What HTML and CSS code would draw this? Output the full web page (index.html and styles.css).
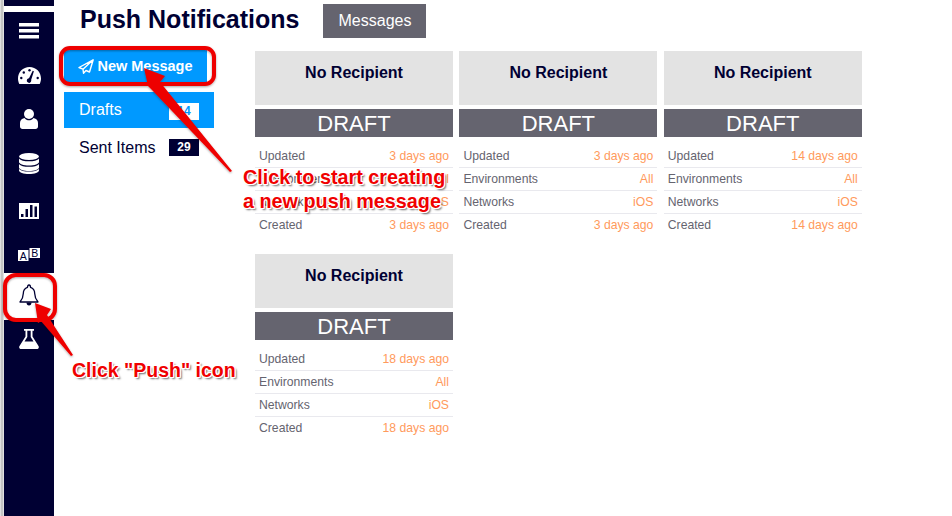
FILE: index.html
```html
<!DOCTYPE html>
<html>
<head>
    <title>Push Notifications</title>
    <link rel="stylesheet" href="styles.css">
</head>
<body>
    <div class="app">
        <div class="edge"></div>
        <nav class="sidebar">
            <div class="sidebar-top"></div>
            <div class="nav-item">
                <svg width="20" height="16" viewBox="0 0 20 16"><path fill="#fff" d="M0 0h20v3.4H0zM0 6h20v3.6H0zM0 12h20v3.6H0z"/></svg>
            </div>
            <div class="nav-item">
                <svg width="23" height="17" viewBox="0 0 23 17">
                    <path fill="#fff" d="M11.500 0C5 0 0 5 0 11.500c0 2 .5 3.800 1.300 5.500h20.400c.8-1.700 1.300-3.500 1.300-5.500C23 5 18 0 11.500 0z"/>
                    <g fill="#000033">
                        <circle cx="11.500" cy="3.300" r="1.200"/>
                        <circle cx="5.800" cy="5.500" r="1.200"/>
                        <circle cx="3.300" cy="11" r="1.200"/>
                        <circle cx="19.700" cy="11" r="1.200"/>
                        <path d="M14.700 3.800l1.200.5-2.700 8.500c.4 1.500-.5 3-1.900 3.100-1.500.1-2.500-1-2.500-2.300 0-1.200.9-2.200 2.200-2.400z"/>
                    </g>
                </svg>
            </div>
            <div class="nav-item">
                <svg width="18" height="20" viewBox="0 0 18 20"><circle cx="9" cy="5" r="5" fill="#fff"/><path fill="#fff" d="M4.500 9c1 1.500 2.800 2.300 4.500 2.300S12.500 10.500 13.500 9C16.500 9.500 18 11.500 18 14v3.500c0 1.400-1 2.500-2.500 2.500h-13C1 20 0 18.900 0 17.500V14c0-2.500 1.500-4.500 4.500-5z"/></svg>
            </div>
            <div class="nav-item">
                <svg width="20" height="21" viewBox="0 0 20 21"><ellipse cx="10" cy="3.500" rx="10" ry="3.500" fill="#fff"/><path fill="#fff" d="M0 5.500C1.500 7.500 5.500 8.300 10 8.300s8.500-.8 10-2.800V9c0 1.900-4.500 3.500-10 3.500S0 10.900 0 9zM0 11C1.500 13 5.500 13.800 10 13.800s8.500-.8 10-2.800v3.500c0 1.900-4.500 3.500-10 3.500S0 16.400 0 14.500zM0 15.800c1.500 2 5.500 2.800 10 2.800s8.500-.8 10-2.800v1.700c0 1.900-4.500 3.500-10 3.500S0 19.400 0 17.500z"/></svg>
            </div>
            <div class="nav-item nav-low">
                <svg width="20" height="16" viewBox="0 0 20 16"><path fill="#fff" fill-rule="evenodd" d="M0 0h20v16H0zM2 11v3h2.500v-3zM6.500 6v8H9V6zM11 2v12h2.500V2zM15.500 3.500V14H18V3.500z"/></svg>
            </div>
            <div class="nav-item nav-low">
                <svg width="22" height="13" viewBox="0 0 22 13">
                    <path fill="#fff" d="M0 2h10.500v11H0zM11.500 0H22v10H11.500z"/>
                    <text x="5.200" y="12" class="icon-letter" text-anchor="middle">A</text>
                    <text x="16.800" y="9" class="icon-letter" text-anchor="middle">B</text>
                </svg>
            </div>
            <div class="nav-item nav-active">
                <svg width="20" height="22" viewBox="0 0 20 22"><path fill="none" stroke="#000033" stroke-width="1.300" stroke-linejoin="round" d="M1 18c2-2.500 3.300-4.500 3.300-8.500C4.300 6 6.300 4 8.500 3.300 8.500 1.800 9 1 10 1s1.500.8 1.500 2.300C13.700 4 15.700 6 15.700 9.500c0 4 1.300 6 3.300 8.500z"/><path fill="#000033" d="M7.500 18.500h5c0 1.700-1 3-2.500 3s-2.500-1.300-2.500-3z"/></svg>
            </div>
            <div class="nav-item nav-flask">
                <svg width="20" height="20" viewBox="0 0 20 20"><path fill="#fff" fill-rule="evenodd" d="M5 0h10v1.800h-1.500v5.700L19.500 17c.8 1.500 0 3-1.700 3H2.200C.5 20-.3 18.500.5 17L6.500 7.500V1.800H5zM8.300 1.800v6.200L5.500 12.500h9L11.700 8V1.800z"/></svg>
            </div>
        </nav>
        <main class="content">
            <header class="page-header">
                <h1 class="page-title">Push Notifications</h1>
                <div class="page-tab">Messages</div>
            </header>
            <div class="page-body">
                <aside class="folders">
                    <button class="new-message">
                        <svg width="16" height="15" viewBox="0 0 16 15"><path fill="none" stroke="#fff" stroke-width="1.400" stroke-linejoin="round" d="M15.200 .8L1 8.500l4 1.700.5 4 2.500-2.700 3.500 1.500zM15.200 .8L5 10.200"/></svg>
                        New Message
                    </button>
                    <div class="folder folder-active">
                        <span>Drafts</span>
                        <span class="count">14</span>
                    </div>
                    <div class="folder folder-sent">
                        <span>Sent Items</span>
                        <span class="count">29</span>
                    </div>
                </aside>
                <section class="cards">
                    <div class="card">
                        <div class="card-title">No Recipient</div>
                        <div class="card-status">DRAFT</div>
                        <div class="row"><span>Updated</span><span class="val">3 days ago</span></div>
                        <div class="row"><span>Environments</span><span class="val">All</span></div>
                        <div class="row"><span>Networks</span><span class="val">iOS</span></div>
                        <div class="row"><span>Created</span><span class="val">3 days ago</span></div>
                    </div>
                    <div class="card">
                        <div class="card-title">No Recipient</div>
                        <div class="card-status">DRAFT</div>
                        <div class="row"><span>Updated</span><span class="val">3 days ago</span></div>
                        <div class="row"><span>Environments</span><span class="val">All</span></div>
                        <div class="row"><span>Networks</span><span class="val">iOS</span></div>
                        <div class="row"><span>Created</span><span class="val">3 days ago</span></div>
                    </div>
                    <div class="card">
                        <div class="card-title">No Recipient</div>
                        <div class="card-status">DRAFT</div>
                        <div class="row"><span>Updated</span><span class="val">14 days ago</span></div>
                        <div class="row"><span>Environments</span><span class="val">All</span></div>
                        <div class="row"><span>Networks</span><span class="val">iOS</span></div>
                        <div class="row"><span>Created</span><span class="val">14 days ago</span></div>
                    </div>
                    <div class="card">
                        <div class="card-title">No Recipient</div>
                        <div class="card-status">DRAFT</div>
                        <div class="row"><span>Updated</span><span class="val">18 days ago</span></div>
                        <div class="row"><span>Environments</span><span class="val">All</span></div>
                        <div class="row"><span>Networks</span><span class="val">iOS</span></div>
                        <div class="row"><span>Created</span><span class="val">18 days ago</span></div>
                    </div>
                </section>
            </div>
        </main>
    </div>

    <!-- screenshot annotations drawn on top of the page -->
    <svg class="marks" width="952" height="516" viewBox="0 0 952 516">
        <defs>
            <filter id="drop" x="-20%" y="-20%" width="140%" height="140%">
                <feDropShadow dx="0" dy="1" stdDeviation="1" flood-color="#000" flood-opacity="0.35"/>
            </filter>
        </defs>
        <g filter="url(#drop)">
            <rect x="61" y="48" width="153" height="36" rx="9" fill="none" stroke="#ee0000" stroke-width="4"/>
            <rect x="5" y="275" width="50" height="45" rx="11" fill="none" stroke="#ee0000" stroke-width="4"/>
            <path fill="#ee0000" d="M144 68L165 76 160 82 232 171 230 172 152 90 148 86z"/>
            <path fill="#ee0000" d="M35 303L51 309 47 315 73 355 71 356 41 321 38 323z"/>
        </g>
    </svg>
    <div class="note note-start">Click to start creating<br>a new push message</div>
    <div class="note note-push">Click "Push" icon</div>
</body>
</html>
```

FILE: styles.css
```css
body {
    margin: 0;
    width: 952px;
    height: 516px;
    overflow: hidden;
    position: relative;
    background: white;
    font-family: "Liberation Sans", Arial, sans-serif;
    color: #000033;
}

.app {
    display: flex;
    height: 516px;
}

.edge {
    width: 4px;
    background: linear-gradient(to right, #f2f2f2 0, #c4c4c4 30%, #c4c4c4 70%, #f4f4f4 100%);
}

.sidebar {
    width: 50px;
    background: #000033;
    display: flex;
    flex-direction: column;
}

.sidebar-top {
    height: 6px;
    margin-bottom: 3px;
    box-shadow: 0 6px 0 white;
}

.nav-item {
    height: 44px;
    display: flex;
    justify-content: center;
    align-items: center;
    flex-shrink: 0;
}

.nav-low {
    padding-top: 7px;
    height: 37px;
}

.nav-active {
    height: 44px;
    padding-bottom: 3px;
    background: white;
}

.nav-flask {
    height: 38px;
}

.icon-letter {
    font-size: 10.500px;
    fill: #000033;
}

.content {
    flex: 1;
}

.page-header {
    display: flex;
    gap: 24px;
    padding: 4px 0 0 26px;
}

.page-title {
    margin: 0;
    font-size: 25px;
    line-height: 31px;
}

.page-tab {
    width: 103px;
    height: 34px;
    line-height: 33px;
    text-align: center;
    background: #65646f;
    color: white;
    font-size: 16px;
}

.page-body {
    display: flex;
    padding: 12px 0 0 10px;
}

.folders {
    width: 150px;
    margin-right: 41px;
}

.new-message {
    display: flex;
    align-items: center;
    justify-content: center;
    gap: 3px;
    width: 143px;
    height: 32px;
    padding: 0;
    border: none;
    background: #0099ff;
    color: white;
    font-family: inherit;
    font-size: 14.500px;
    font-weight: bold;
}

.folder {
    display: flex;
    justify-content: space-between;
    align-items: center;
    height: 37px;
    padding: 0 15px;
    font-size: 16px;
}

.folder-active {
    margin-top: 10px;
    height: 36px;
    background: #0099ff;
    color: white;
}

.folder-sent {
    padding-top: 1px;
}

.count {
    width: 30px;
    height: 17px;
    line-height: 17px;
    text-align: center;
    background: #000033;
    color: white;
    font-size: 12px;
    font-weight: bold;
}

.folder-active .count {
    background: white;
    color: #0099ff;
    margin-top: 2px;
}

.cards {
    display: grid;
    grid-template-columns: repeat(3, 198px);
    column-gap: 6.400px;
    row-gap: 17px;
    align-content: start;
    margin-top: 1px;
}

.card-title {
    height: 54px;
    padding-top: 13px;
    box-sizing: border-box;
    background: #e3e3e3;
    text-align: center;
    font-size: 16px;
    font-weight: bold;
}

.card-status {
    height: 28px;
    line-height: 29px;
    margin: 4px 0 8px;
    background: #65646f;
    color: white;
    text-align: center;
    font-size: 22px;
}

.row {
    display: flex;
    justify-content: space-between;
    height: 23px;
    line-height: 23px;
    padding: 0 4px;
    box-sizing: border-box;
    border-bottom: 1px solid #e9e9ee;
    color: #65646f;
    font-size: 12.200px;
}

.row:last-child {
    border-bottom: none;
}

.val {
    color: #ff9a5c;
}

.marks {
    position: absolute;
    left: 0;
    top: 0;
    pointer-events: none;
}

.note {
    position: absolute;
    color: #f00000;
    font-size: 19.800px;
    font-weight: bold;
    line-height: 24px;
    white-space: nowrap;
    text-shadow: 1px 0 0 white, -1px 0 0 white, 0 1px 0 white, 0 -1px 0 white,
        1px 1px 0 white, -1px -1px 0 white, 1px -1px 0 white, -1px 1px 0 white,
        2px 2px 2px rgba(0, 0, 0, 0.6);
}

.note-start {
    left: 243px;
    top: 165px;
}

.note-push {
    left: 72px;
    top: 358px;
    font-size: 19.500px;
}
```
